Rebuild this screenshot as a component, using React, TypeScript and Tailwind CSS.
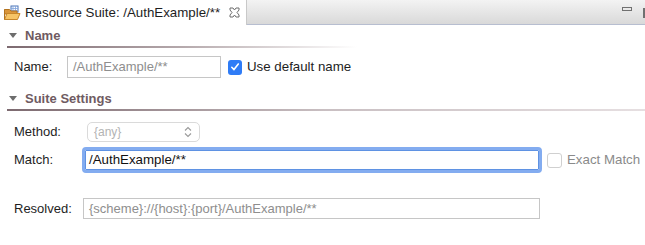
import React from "react";

function FolderIcon() {
  return (
    <svg width="18" height="16" viewBox="0 0 18 16">
      <rect x="8" y="1" width="7" height="6" fill="#ffffff" stroke="#4a74b8" strokeWidth="1" />
      <path d="M10 1v6M12.5 1v6M8 3.5h7M8 5.5h7" stroke="#7fa2dc" strokeWidth="0.8" />
      <path d="M1.5 4.5h5l1.5 1.5h6v3H1.5z" fill="#d9953a" stroke="#b3731f" strokeWidth="1" />
      <path d="M1.5 14.5L4 8.5h13l-2.5 6z" fill="#f6c466" stroke="#c7862a" strokeWidth="1" />
      <path d="M1.5 4.5v10" stroke="#b3731f" strokeWidth="1" />
    </svg>
  );
}

function CloseIcon() {
  return (
    <svg width="11" height="11" viewBox="0 0 11 11">
      <path
        d="M1 1h3l1.5 2 1.5-2h3v2L8 5.5 10 8v2H7L5.5 8 4 10H1V8l2-2.5L1 3z"
        fill="#ffffff"
        stroke="#6e6e6e"
        strokeWidth="1"
        strokeLinejoin="miter"
      />
    </svg>
  );
}

function Triangle() {
  return (
    <svg width="8" height="5" viewBox="0 0 8 5">
      <path d="M0 0h8L4 5z" fill="#6d6d6d" />
    </svg>
  );
}

function UpDown() {
  return (
    <svg width="8" height="12" viewBox="0 0 8 12">
      <path d="M1 4.5L4 1.5 7 4.5M1 7.5L4 10.5 7 7.5" fill="none" stroke="#9a9a9a" strokeWidth="1.1" />
    </svg>
  );
}

function SectionHeader({ title, lineClass }: { title: string; lineClass: string }) {
  return (
    <div>
      <div className="h-[21px] flex items-center pl-[9px]">
        <Triangle />
        <span className="ml-[8px] text-[13px] font-bold text-[#6f5b62] leading-none">{title}</span>
      </div>
      <div className={lineClass} />
    </div>
  );
}

export default function App() {
  return (
    <div
      className="w-[645px] h-[245px] bg-white overflow-hidden text-[13px] text-[#1e1e1e]"
      style={{ fontFamily: '"Liberation Sans", Arial, sans-serif' }}
    >
      {/* Tab bar */}
      <div className="h-[25px] flex">
        <div className="w-[247px] bg-white flex items-center border-r border-[#c9c9c9]">
          <div className="ml-[3px] mt-[1px] flex items-center">
            <FolderIcon />
          </div>
          <span className="ml-[4px] text-[13.3px] text-[#1e1e1e] whitespace-nowrap">Resource Suite: /AuthExample/**</span>
          <div className="ml-[9px] mt-[-1px] flex items-center">
            <CloseIcon />
          </div>
        </div>
        <div className="flex-1 bg-gradient-to-b from-[#f3f3f3] to-[#d9d9d9] border-b border-[#b7bed0] flex items-start justify-end">
          <div className="mt-[7px] w-[10px] h-[4px] border border-[#707070] mr-[11px]" />
          <div className="mt-[8px] w-[2px] h-[10px] bg-[#707070]" />
        </div>
      </div>

      {/* Name section */}
      <SectionHeader
        title="Name"
        lineClass="ml-[7px] w-[350px] h-[2px] bg-gradient-to-r from-[#7d6a70] via-[#b5a9ac] to-[#ffffff]"
      />
      <div className="mt-[8px] flex items-center h-[22px]">
        <span className="ml-[14px] w-[53px]">Name:</span>
        <div className="w-[154px] h-[22px] border border-[#c6c6c6] flex items-center px-[5px] text-[#8e8e8e]">
          /AuthExample/**
        </div>
        <div className="ml-[7px] w-[14px] h-[15px] rounded-[3px] bg-[#2f7cf6] flex items-center justify-center">
          <svg width="10" height="10" viewBox="0 0 10 10">
            <path d="M1.8 5.3L4 7.6 8.3 2" fill="none" stroke="#ffffff" strokeWidth="1.6" strokeLinecap="round" strokeLinejoin="round" />
          </svg>
        </div>
        <span className="ml-[5px] text-[13.3px]">Use default name</span>
      </div>

      {/* Suite Settings section */}
      <div className="mt-[10px]">
        <SectionHeader
          title="Suite Settings"
          lineClass="ml-[7px] h-[2px] bg-gradient-to-r from-[#7d6a70] via-[#c9bfc2] to-[#e6dfe1]"
        />
      </div>

      <div className="mt-[11px] flex items-center h-[20px]">
        <span className="ml-[14px] w-[73px]">Method:</span>
        <div className="w-[113px] h-[20px] rounded-[5px] border border-[#dadada] flex items-center justify-between pl-[6px] pr-[7px] text-[#b3b3b3] text-[12px]">
          <span>{"{any}"}</span>
          <UpDown />
        </div>
      </div>

      <div className="mt-[5px] flex items-center h-[26px]">
        <span className="ml-[14px] w-[68px]">Match:</span>
        <div className="w-[460px] h-[26px] rounded-[4px] border-[3px] border-[#83acf0] flex items-center">
          <div className="w-full h-full border border-[#5f92e3] rounded-[1px] flex items-center pl-[3px] text-[#111111] text-[13.3px]">
            /AuthExample/**
          </div>
        </div>
        <div className="ml-[5px] w-[15px] h-[15px] rounded-[3px] border border-[#d0d0d0] bg-white" />
        <span className="ml-[5px] text-[#8a8a8a] text-[13.3px]">Exact Match</span>
      </div>

      <div className="mt-[25px] flex items-center h-[21px]">
        <span className="ml-[14px] w-[69px]">Resolved:</span>
        <div className="w-[457px] h-[21px] border border-[#c6c6c6] flex items-center px-[5px] text-[#8e8e8e] whitespace-nowrap">
          {"{scheme}://{host}:{port}/AuthExample/**"}
        </div>
      </div>
    </div>
  );
}
